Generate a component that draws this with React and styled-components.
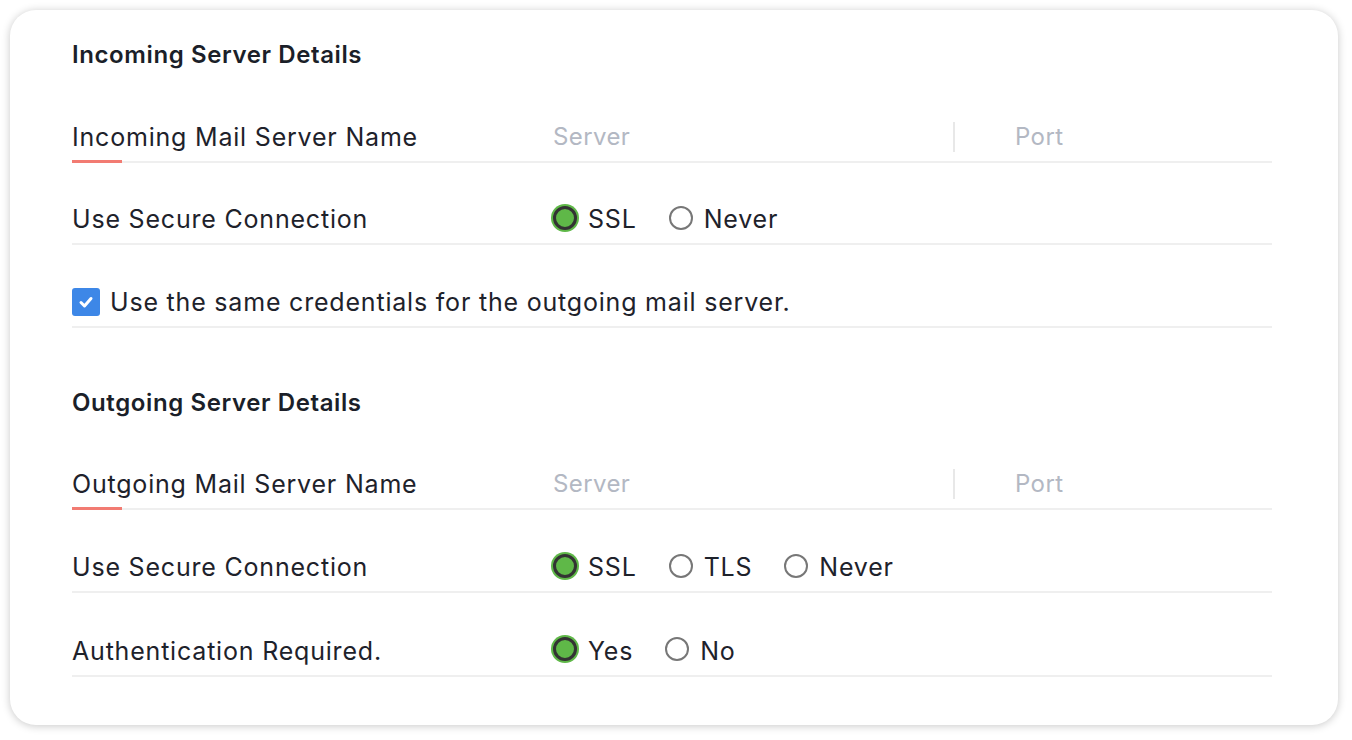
import React from "react";
import styled, { createGlobalStyle } from "styled-components";

const Global = createGlobalStyle`
  html, body { margin: 0; padding: 0; background: #ffffff; }
  body { font-family: Inter, "Open Sans", sans-serif; color: #1e222b; }
  * { box-sizing: border-box; }
`;

const Page = styled.div`
  padding: 10px 14px 15px 10px;
`;

const Card = styled.div`
  width: 1328px;
  height: 715px;
  background: #fff;
  border-radius: 26px;
  box-shadow: 0 1px 8px rgba(0, 0, 0, 0.22);
  padding: 30px 66px 0 62px;
`;

const Heading = styled.h2`
  margin: ${(p) => (p.$first ? "0" : "60px")} 0 10px 0;
  font-size: 24px;
  line-height: 30px;
  font-weight: 600;
  color: #1b1f29;
  letter-spacing: 0.6px;
`;

const Row = styled.div`
  position: relative;
  height: ${(p) => p.$h || 82.5}px;
  display: flex;
  align-items: center;
  padding-top: 33px;
  border-bottom: 2px solid #efefef;
`;

const Label = styled.div`
  width: 481px;
  flex-shrink: 0;
  font-size: 25px;
  line-height: 30px;
  color: #1e222b;
  letter-spacing: 0.8px;
`;

const Accent = styled.span`
  position: absolute;
  left: 0;
  bottom: -2px;
  width: 50px;
  height: 3px;
  background: #f27b72;
`;

const Field = styled.div`
  display: flex;
  align-items: center;
  flex: 1;
`;

const Placeholder = styled.div`
  font-size: 24px;
  line-height: 30px;
  color: #b3b8c3;
  letter-spacing: 0.4px;
  width: ${(p) => p.$w}px;
  padding-left: ${(p) => p.$pl || 0}px;
`;

const Divider = styled.div`
  width: 2px;
  height: 30px;
  background: #e8e8e8;
`;

const Options = styled.div`
  display: flex;
  align-items: center;
  gap: 32px;
`;

const Option = styled.label`
  display: flex;
  align-items: center;
  gap: 11px;
  font-size: 25px;
  line-height: 30px;
  color: #1e222b;
  letter-spacing: 0.8px;
`;

const Radio = styled.span`
  width: 24px;
  height: 24px;
  border-radius: 50%;
  flex-shrink: 0;
  margin-top: -3px;
  ${(p) =>
    p.$on
      ? `background: #5fb848; border: 3px solid #333; box-shadow: 0 0 0 2px #5fb848;`
      : `background: #fff; border: 2px solid #777;`}
`;

const CheckRow = styled.label`
  display: flex;
  align-items: center;
  gap: 10px;
  font-size: 25px;
  line-height: 30px;
  color: #1e222b;
  letter-spacing: 0.8px;
`;

const Box = styled.span`
  width: 28px;
  height: 28px;
  border-radius: 3px;
  background: #3d87e7;
  display: flex;
  align-items: center;
  justify-content: center;
`;

const Check = () => (
  <svg width="16" height="16" viewBox="0 0 16 16">
    <path d="M3 8.5 L6.5 12 L13 4.5" fill="none" stroke="#fff" strokeWidth="3" strokeLinecap="round" strokeLinejoin="round" />
  </svg>
);

const RadioGroup = ({ items, selected }) => (
  <Options>
    {items.map((it) => (
      <Option key={it}>
        <Radio $on={it === selected} />
        {it}
      </Option>
    ))}
  </Options>
);

const ServerRow = ({ label }) => (
  <Row>
    <Label>{label}</Label>
    <Accent />
    <Field>
      <Placeholder $w={400}>Server</Placeholder>
      <Divider />
      <Placeholder $pl={60}>Port</Placeholder>
    </Field>
  </Row>
);

export default function App() {
  return (
    <>
      <Global />
      <Page>
        <Card>
          <Heading $first>Incoming Server Details</Heading>
          <ServerRow label="Incoming Mail Server Name" />
          <Row>
            <Label>Use Secure Connection</Label>
            <RadioGroup items={["SSL", "Never"]} selected="SSL" />
          </Row>
          <Row>
            <CheckRow>
              <Box>
                <Check />
              </Box>
              Use the same credentials for the outgoing mail server.
            </CheckRow>
          </Row>

          <Heading>Outgoing Server Details</Heading>
          <ServerRow label="Outgoing Mail Server Name" />
          <Row $h={83}>
            <Label>Use Secure Connection</Label>
            <RadioGroup items={["SSL", "TLS", "Never"]} selected="SSL" />
          </Row>
          <Row $h={84}>
            <Label>Authentication Required.</Label>
            <RadioGroup items={["Yes", "No"]} selected="Yes" />
          </Row>
        </Card>
      </Page>
    </>
  );
}
